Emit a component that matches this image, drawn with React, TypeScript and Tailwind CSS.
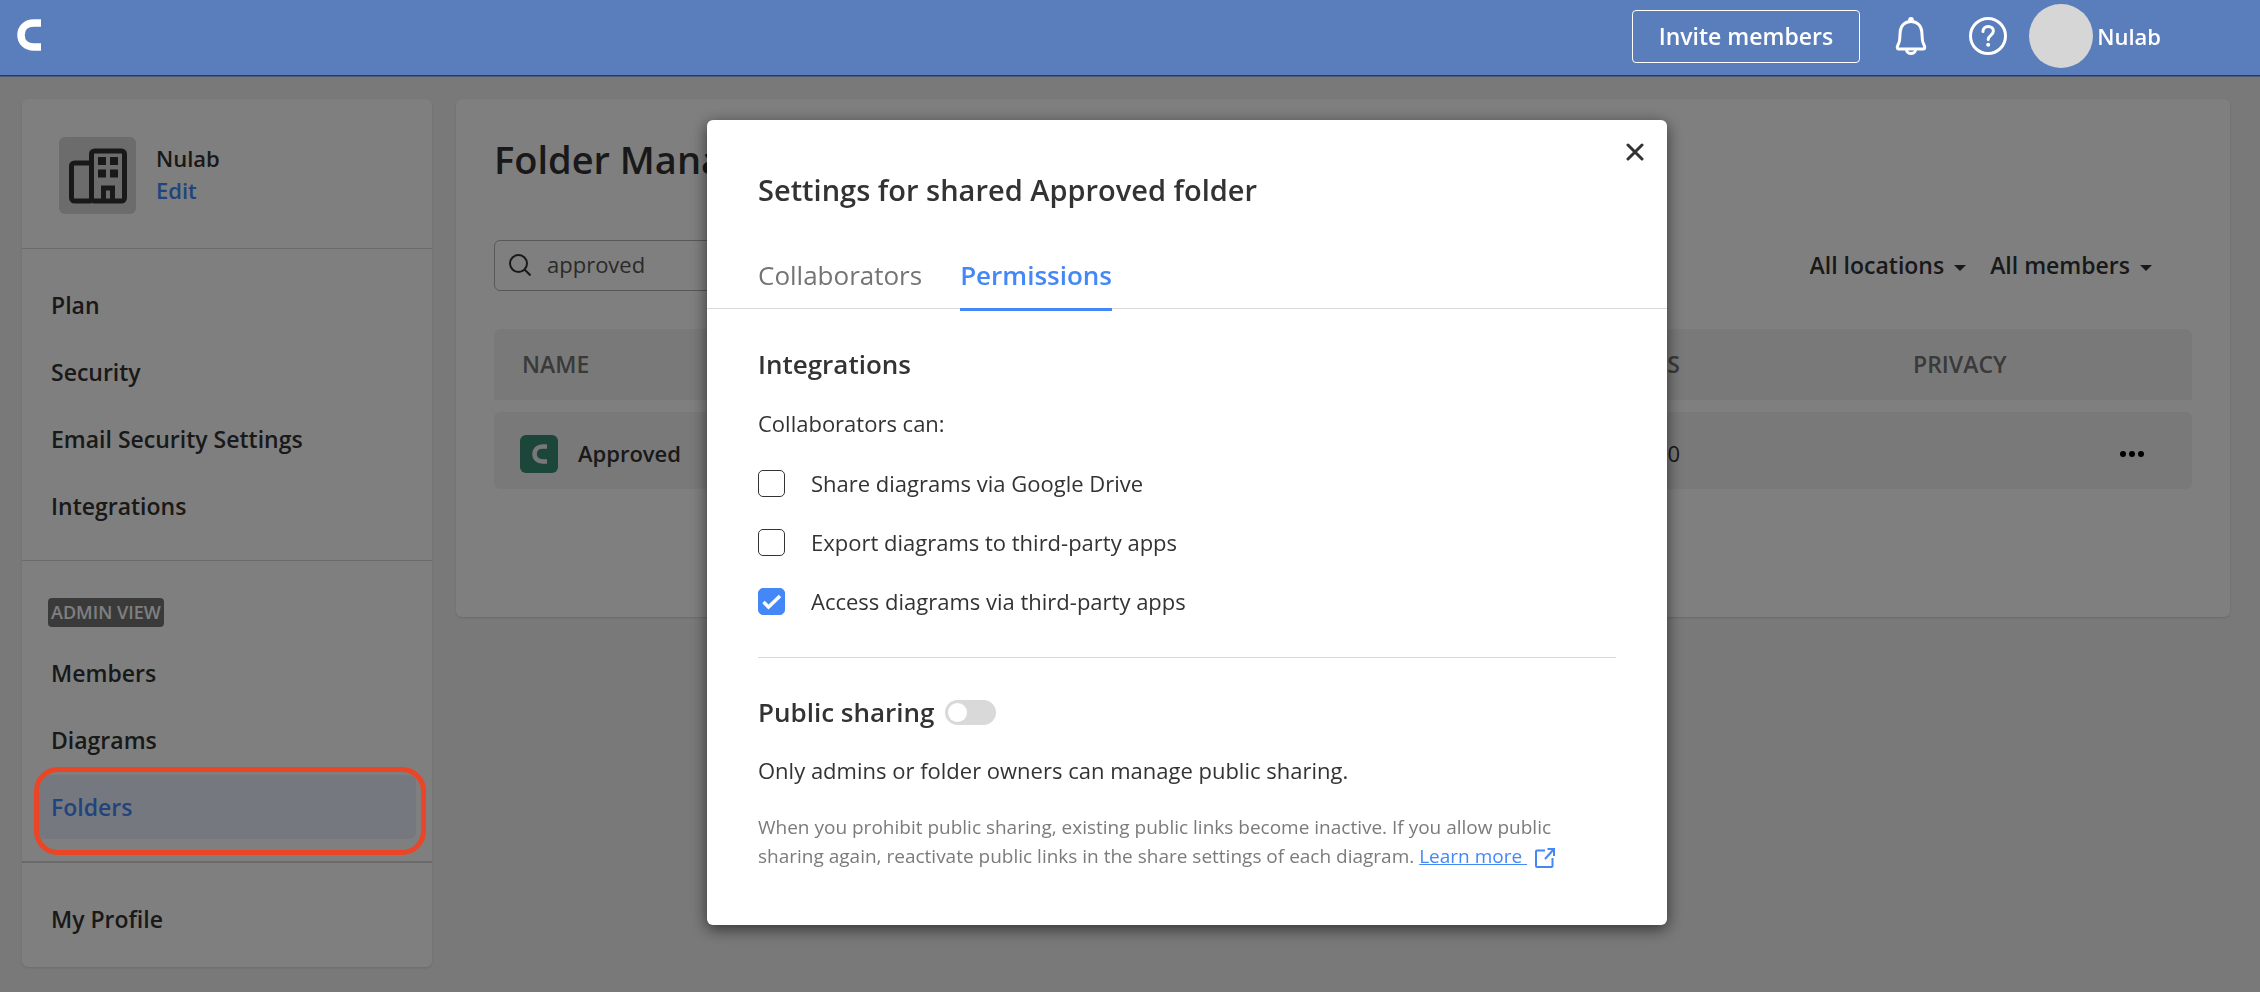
import { useState } from "react";

const accountLinks = ["Plan", "Security", "Email Security Settings", "Integrations"];
const adminLinks = ["Members", "Diagrams", "Folders"];

function Logo({ className }: { className: string }) {
  return (
    <svg viewBox="0 0 24 32" className={className} fill="none" aria-hidden="true">
      <path d="M24 4H17C9 4 4 9 4 16s5 12 13 12h7" stroke="currentColor" strokeWidth="7.5" />
    </svg>
  );
}

function Caret() {
  return (
    <svg viewBox="0 0 12 6" className="mt-1 h-[6px] w-3" aria-hidden="true">
      <path d="M0 0h12L6 6z" fill="currentColor" />
    </svg>
  );
}

function Header() {
  return (
    <header className="relative z-30 flex h-[76px] items-center border-b border-[#1f3b75] bg-[#5a7dbc] pb-[3px] pl-[17px] pr-[99px] text-white shadow-[0_1px_0_#4f5b75]">
      <a href="#home" aria-label="Home" className="-mt-[2px]">
        <Logo className="h-8 w-6" />
      </a>
      <div className="ml-auto flex items-center">
        <button className="h-[53px] rounded border border-white px-[26px] text-[23px] font-semibold">
          Invite members
        </button>
        <button aria-label="Notifications" className="ml-[35px]">
          <svg viewBox="0 0 32 38" className="h-[38px] w-8" fill="none" stroke="currentColor" strokeWidth="3">
            <path d="M16 4.500C9.500 4.500 5.500 9 5.200 15L4.600 23c-.2 2.500-1 3.500-1.900 5.500C1.900 30.500 2.200 32 3.500 32h25c1.300 0 1.600-1.500.8-3.500-.9-2-1.700-3-1.900-5.500L26.800 15C26.500 9 22.500 4.500 16 4.500z" strokeLinejoin="round" />
            <path d="M11.500 32.500a4.500 4 0 0 0 9 0" />
            <circle cx="16" cy="2.800" r="2.800" fill="currentColor" stroke="none" />
          </svg>
        </button>
        <button aria-label="Help" className="ml-[41px]">
          <svg viewBox="0 0 40 40" className="size-10" fill="none" stroke="currentColor" strokeWidth="3" strokeLinecap="round">
            <circle cx="20" cy="20" r="17.500" />
            <path d="M15 15.500c0-3.200 2.200-5 5.200-5s5.200 1.800 5.200 4.500c0 4.200-5.200 4.500-5.200 8.500" />
            <circle cx="20.200" cy="28.800" r="2" fill="currentColor" stroke="none" />
          </svg>
        </button>
        <button className="ml-[21px] flex items-center gap-1 text-[22px] font-semibold">
          <span className="size-16 rounded-full bg-[#d6d6d6]" />
          Nulab
        </button>
      </div>
    </header>
  );
}

function NavLink({ label }: { label: string }) {
  const active = label === "Folders";
  return (
    <li className="relative">
      <a
        href={"#" + label.toLowerCase().replaceAll(" ", "-")}
        className={`flex h-16 items-center rounded-md px-[13px] text-[23px] font-semibold ${
          active ? "bg-[#ebf2ff] text-[#4488f8]" : ""
        }`}
      >
        {label}
      </a>
      {active && (
        <span className="pointer-events-none absolute -left-1 -right-[10px] -top-2 -bottom-4 z-20 rounded-3xl border-[5px] border-[#ea4526]" />
      )}
    </li>
  );
}

function Sidebar() {
  return (
    <aside className="w-[410px] shrink-0 rounded-md bg-white shadow-sm">
      <div className="flex h-[149px] items-start gap-5 pt-[38px] pl-[37px]">
        <div className="flex size-[77px] items-center justify-center rounded-md bg-[#d9d9d9]">
          <svg viewBox="0 0 58 56" className="h-14 w-[58px]" fill="none" stroke="currentColor" strokeWidth="5" aria-hidden="true">
            <rect x="22.500" y="3" width="33" height="50" rx="3" />
            <path d="M22.500 15H5.500a3 3 0 0 0-3 3v32a3 3 0 0 0 3 3h17" />
            <path d="M34.500 53V40h9v13" />
            <path d="M29 13h8M41 13h8M29 25.500h8M41 25.500h8" strokeWidth="8" />
          </svg>
        </div>
        <div className="pt-[5px] text-[22px] leading-8 font-semibold">
          <p>Nulab</p>
          <a href="#edit" className="text-[#4488f8]">
            Edit
          </a>
        </div>
      </div>
      <nav>
        <ul className="flex flex-col gap-[3px] border-t border-[#d4d4d4] px-4 pt-6 pb-[22px]">
          {accountLinks.map((label) => (
            <NavLink key={label} label={label} />
          ))}
        </ul>
        <div className="border-t border-[#d4d4d4] px-4 pt-[37px] pb-[22px]">
          <span className="ml-[10px] flex h-[29px] w-fit items-center rounded bg-[#747474] px-[3px] text-[18px] font-semibold text-white">
            ADMIN VIEW
          </span>
          <ul className="mt-[14px] flex flex-col gap-[3px]">
            {adminLinks.map((label) => (
              <NavLink key={label} label={label} />
            ))}
          </ul>
        </div>
        <ul className="border-t-2 border-[#d4d4d4] px-4 pt-6 pb-4">
          <NavLink label="My Profile" />
        </ul>
      </nav>
    </aside>
  );
}

function FilterSelect({ label, option }: { label: string; option: string }) {
  return (
    <label className="flex items-center gap-[10px]">
      <select aria-label={label} className="field-sizing-content appearance-none bg-transparent text-[23px] font-semibold">
        <option>{option}</option>
      </select>
      <Caret />
    </label>
  );
}

function FolderManagement() {
  return (
    <main className="min-w-0 flex-1 rounded-md bg-white px-[38px] pt-[34px] pb-[116px] shadow-sm">
      <h1 className="text-[38px] leading-[52px] font-semibold">Folder Management</h1>
      <div className="mt-[55px] flex items-center justify-between pr-10">
        <label className="flex h-[51px] w-[480px] items-center gap-4 rounded-md border border-[#b0b0b0] px-[14px] pb-[2px]">
          <svg viewBox="0 0 22 22" className="size-[22px]" fill="none" stroke="currentColor" strokeWidth="2" aria-hidden="true">
            <circle cx="9.500" cy="9.500" r="8.500" />
            <path d="M15.500 15.500L21.500 21.500" />
          </svg>
          <input aria-label="Search folders" defaultValue="approved" className="min-w-0 flex-1 bg-transparent text-[22px] text-[#555] outline-none" />
        </label>
        <div className="flex gap-6">
          <FilterSelect label="Location" option="All locations" />
          <FilterSelect label="Member" option="All members" />
        </div>
      </div>
      <table className="mt-[26px] w-full table-fixed border-separate border-spacing-x-0 border-spacing-y-3 text-left text-[22px]">
        <thead>
          <tr className="h-[71px] bg-[#f3f3f3] text-[23px] text-[#747474]">
            <th className="rounded-tl-md pl-7 font-semibold">NAME</th>
            <th className="w-[360px] text-right font-semibold">DIAGRAMS</th>
            <th className="w-[396px] pl-[233px] font-semibold">PRIVACY</th>
            <th className="w-[116px] rounded-tr-md" aria-label="Actions" />
          </tr>
        </thead>
        <tbody>
          <tr className="h-[77px] bg-[#f3f3f3]">
            <td className="rounded-l-md pt-[6px] pl-[26px]">
              <div className="flex items-center gap-5 font-semibold">
                <span className="flex size-[38px] items-center justify-center rounded-md bg-[#3a8c74] text-[#f0f0f0]">
                  <Logo className="h-5 w-[15px]" />
                </span>
                Approved
              </div>
            </td>
            <td className="pt-[6px] text-right">0</td>
            <td />
            <td className="rounded-r-md pt-[6px] pl-11">
              <button aria-label="More actions" className="flex gap-[3px]">
                <span className="size-[6px] rounded-full bg-black" />
                <span className="size-[6px] rounded-full bg-black" />
                <span className="size-[6px] rounded-full bg-black" />
              </button>
            </td>
          </tr>
        </tbody>
      </table>
    </main>
  );
}

function PermissionCheckbox({ label, defaultChecked }: { label: string; defaultChecked?: boolean }) {
  return (
    <label className="flex h-7 items-center gap-[26px] text-[22px]">
      <span className="relative flex size-[27px]">
        <input
          type="checkbox"
          defaultChecked={defaultChecked}
          className="peer size-full appearance-none rounded-[5px] border border-[#333] bg-white checked:border-[#4488f8] checked:bg-[#4488f8]"
        />
        <svg viewBox="0 0 27 27" className="pointer-events-none absolute inset-0 hidden peer-checked:block" fill="none" aria-hidden="true">
          <path d="M5.500 14l5 5L22 8" stroke="white" strokeWidth="3.500" />
        </svg>
      </span>
      {label}
    </label>
  );
}

function SettingsDialog() {
  const [isPublic, setIsPublic] = useState(false);
  return (
    <div className="fixed inset-0 z-10 flex items-start justify-center bg-black/50 pt-[120px] pl-[114px]">
      <section
        role="dialog"
        aria-labelledby="dialog-title"
        className="relative w-[960px] rounded-md bg-white pb-[54px] shadow-[0_4px_16px_rgba(0,0,0,0.6)]"
      >
        <button aria-label="Close" className="absolute top-[23px] right-[23px]">
          <svg viewBox="0 0 18 18" className="size-[18px]" fill="none" stroke="currentColor" strokeWidth="3" strokeLinecap="round">
            <path d="M2 2l14 14M16 2L2 16" />
          </svg>
        </button>
        <h2 id="dialog-title" className="px-[51px] pt-[50px] text-[29px] leading-10 font-semibold">
          Settings for shared Approved folder
        </h2>
        <div role="tablist" className="mt-[47px] flex h-[52px] gap-[38px] border-b border-[#d9d9d9] px-[51px] text-[26px] leading-9">
          <button role="tab" aria-selected="false" className="flex items-start text-[#747474]">
            Collaborators
          </button>
          <button role="tab" aria-selected="true" className="-mb-[3px] flex items-start border-b-3 border-[#4488f8] font-semibold text-[#4488f8]">
            Permissions
          </button>
        </div>
        <div className="px-[51px]">
          <h3 className="mt-[37px] text-[26px] leading-9 font-semibold">Integrations</h3>
          <p className="mt-[23px] text-[22px] leading-9">Collaborators can:</p>
          <div className="mt-7 flex flex-col gap-[31px] border-b border-[#d9d9d9] pb-[42px]">
            <PermissionCheckbox label="Share diagrams via Google Drive" />
            <PermissionCheckbox label="Export diagrams to third-party apps" />
            <PermissionCheckbox label="Access diagrams via third-party apps" defaultChecked />
          </div>
          <div className="mt-9 flex items-center gap-[10px]">
            <h3 className="text-[26px] leading-9 font-semibold">Public sharing</h3>
            <button
              role="switch"
              aria-checked={isPublic}
              aria-label="Public sharing"
              onClick={() => setIsPublic(!isPublic)}
              className={`flex h-[25px] w-[51px] items-center rounded-full px-[3px] ${
                isPublic ? "justify-end bg-[#4488f8]" : "bg-[#d9d9d9]"
              }`}
            >
              <span className="size-[19px] rounded-full bg-white" />
            </button>
          </div>
          <p className="mt-[22px] text-[22px] leading-9">
            Only admins or folder owners can manage public sharing.
          </p>
          <p className="mt-[25px] text-[19px] leading-[29px] text-[#7b7b7b]">
            When you prohibit public sharing, existing public links become inactive. If you allow public
            sharing again, reactivate public links in the share settings of each diagram.{" "}
            <a href="#learn-more" className="text-[#4488f8]">
              <span className="whitespace-pre underline">Learn more </span>
              <svg viewBox="0 0 20 20" className="ml-2 inline size-5" fill="none" stroke="currentColor" strokeWidth="2" aria-hidden="true">
                <path d="M10 2.500H2a1 1 0 0 0-1 1V18a1 1 0 0 0 1 1h14.500a1 1 0 0 0 1-1v-8M12.500 1H19v7M19 1l-9 10" />
              </svg>
            </a>
          </p>
        </div>
      </section>
    </div>
  );
}

export default function App() {
  return (
    <div className="min-h-screen bg-[#f3f3f3] font-['Open_Sans',sans-serif] text-[#333]">
      <Header />
      <div className="flex items-start gap-6 pt-[23px] pr-[30px] pb-[25px] pl-[22px]">
        <Sidebar />
        <FolderManagement />
      </div>
      <SettingsDialog />
    </div>
  );
}
